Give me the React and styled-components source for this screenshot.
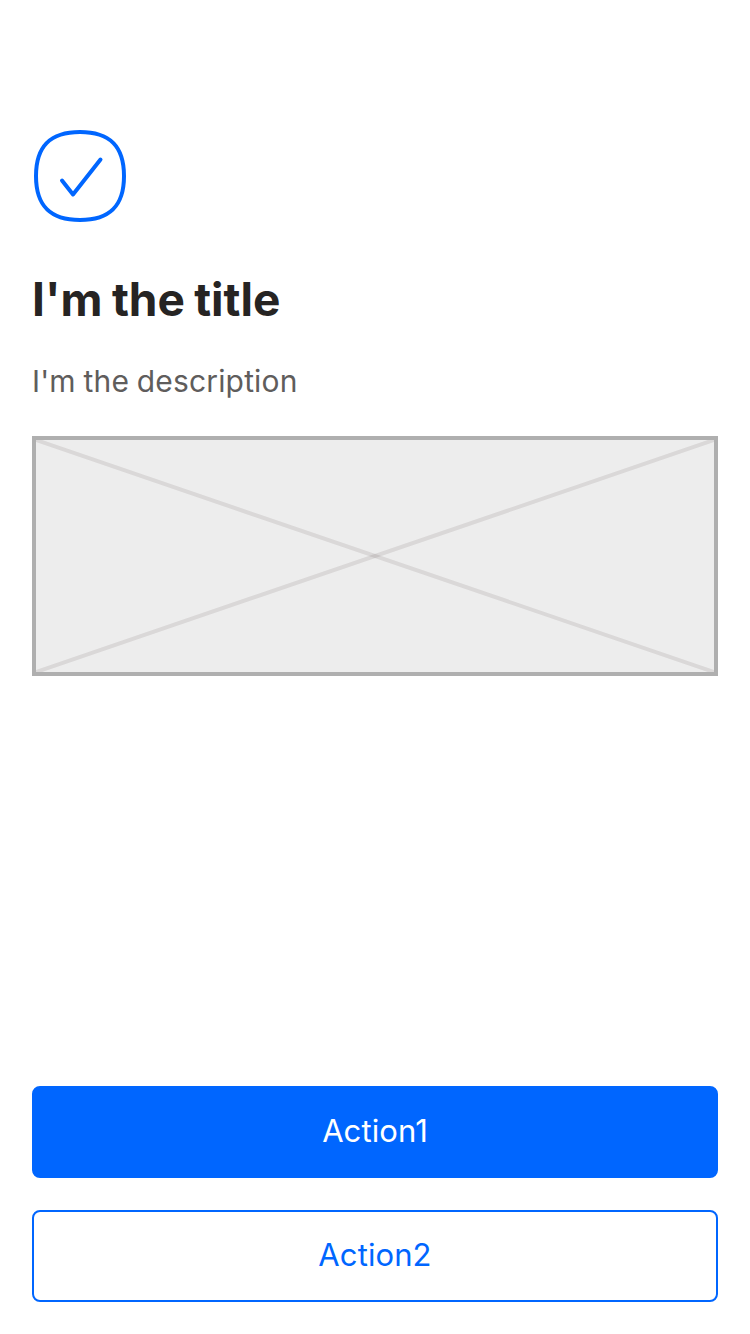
import React from "react";
import styled, { createGlobalStyle } from "styled-components";

const Global = createGlobalStyle`
  * { box-sizing: border-box; }
  body { margin: 0; background: #fff; font-family: Inter, "Liberation Sans", sans-serif; }
`;
const Screen = styled.main`
  width: 100%;
  height: 1334px;
  padding: 128px 32px 32px;
  display: flex;
  flex-direction: column;
  overflow: hidden;
`;
const Icon = styled.svg`
  display: block;
  width: 96px;
  height: 96px;
  flex: none;
`;
const Title = styled.h1`
  margin: 43px 0 0;
  font-size: 46px;
  line-height: 64px;
  font-weight: 700;
  letter-spacing: 0;
  word-spacing: -1.5px;
  color: #262423;
  white-space: nowrap;
`;
const Description = styled.p`
  margin: 26px 0 0;
  font-size: 30px;
  line-height: 48px;
  letter-spacing: 0.15px;
  word-spacing: -0.8px;
  color: #5f5d5c;
  white-space: nowrap;
`;
const Placeholder = styled.div`
  margin-top: 31px;
  height: 240px;
  flex: none;
  border: 4px solid #afafaf;
  background: #ededed;
`;
const Cross = styled.svg`
  display: block;
  width: 100%;
  height: 100%;
`;
const Actions = styled.div`
  margin-top: auto;
  display: flex;
  flex-direction: column;
  gap: 32px;
`;
const Button = styled.button`
  height: 92px;
  padding: 0 0 2px;
  border: 2px solid #06f;
  border-radius: 8px;
  background: ${(p) => (p.$primary ? "#06f" : "#fff")};
  color: ${(p) => (p.$primary ? "#fff" : "#06f")};
  font: 400 31px/48px Inter, "Liberation Sans", sans-serif;
  letter-spacing: 0.1px;
`;

export default function App() {
  return (
    <Screen>
      <Global />
      <Icon viewBox="0 0 96 96" fill="none" stroke="#06f" strokeWidth="4">
        <path d="M48 4C78 4 92 18 92 48S78 92 48 92 4 78 4 48 18 4 48 4Z" />
        <path d="M30 52.5L41 66.5L68.5 31.5" strokeLinecap="round" strokeLinejoin="round" />
      </Icon>
      <Title>I'm the title</Title>
      <Description>I'm the description</Description>
      <Placeholder>
        <Cross viewBox="0 0 678 232" preserveAspectRatio="none" stroke="#1e0a0a" strokeOpacity=".09" strokeWidth="4">
          <path d="M0 0L678 232" />
          <path d="M678 0L0 232" />
        </Cross>
      </Placeholder>
      <Actions>
        <Button $primary>Action1</Button>
        <Button>Action2</Button>
      </Actions>
    </Screen>
  );
}
